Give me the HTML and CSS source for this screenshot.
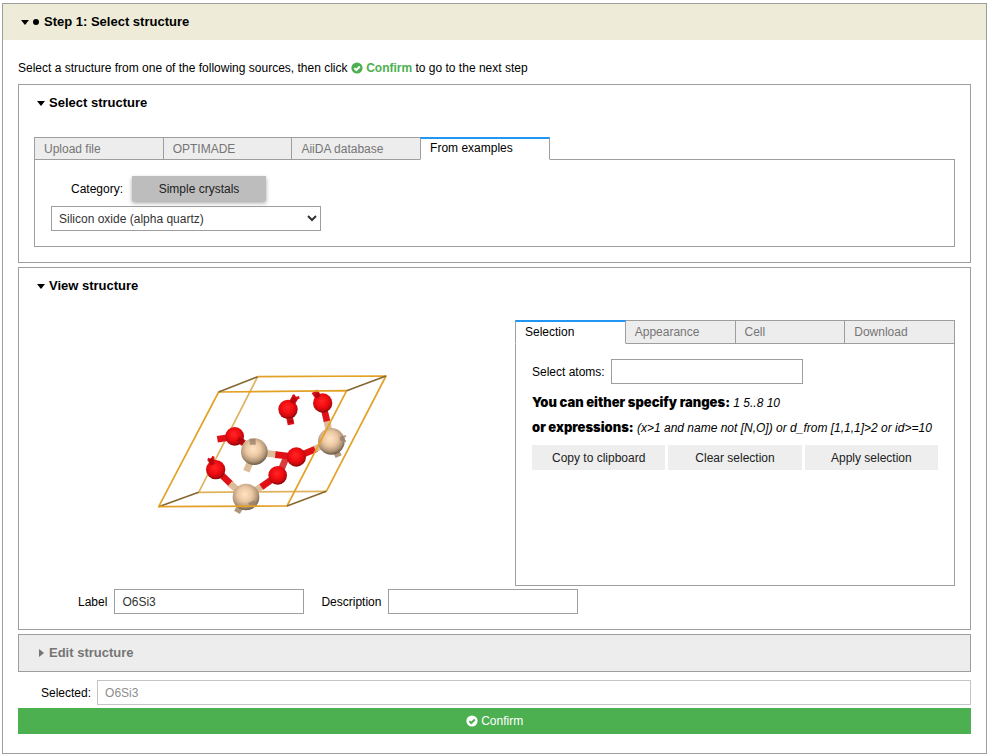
FILE: index.html
```html
<!DOCTYPE html>
<html lang="en">
<head>
<meta charset="utf-8">
<meta name="viewport" content="width=device-width, initial-scale=1">
<title>Select structure</title>
<link rel="stylesheet" href="styles.css">
</head>
<body>
<svg class="defs" aria-hidden="true">
  <symbol id="check-circle" viewBox="0 0 12 12">
    <circle cx="6" cy="6" r="5.6" fill="currentColor"/>
    <path class="tick" d="M3.3 6.1 5.3 8 8.8 4.5"/>
  </symbol>
</svg>
<main class="step">
  <h1 class="step-head"><button type="button" class="toggle"><span class="caret"></span><span class="dot"></span>Step 1: Select structure</button></h1>
  <div class="step-body">
    <p class="intro">Select a structure from one of the following sources, then click <span class="hint"><svg class="icon"><use href="#check-circle"/></svg> Confirm</span> to go to the next step</p>

    <section class="panel">
      <h2 class="panel-head"><button type="button" class="toggle"><span class="caret"></span>Select structure</button></h2>
      <div class="panel-body">
        <div class="tabs sources" role="tablist">
          <button type="button" role="tab" class="tab">Upload file</button>
          <button type="button" role="tab" class="tab">OPTIMADE</button>
          <button type="button" role="tab" class="tab">AiiDA database</button>
          <button type="button" role="tab" class="tab active" aria-selected="true">From examples</button>
        </div>
        <div class="tab-content">
          <div class="category">
            <span class="category-label">Category:</span>
            <button type="button" class="btn pressed">Simple crystals</button>
          </div>
          <select class="field example" aria-label="Example structure">
            <option>Silicon oxide (alpha quartz)</option>
          </select>
        </div>
      </div>
    </section>

    <section class="panel">
      <h2 class="panel-head"><button type="button" class="toggle"><span class="caret"></span>View structure</button></h2>
      <div class="panel-body">
        <div class="view">
          <svg class="molecule" viewBox="-348 -120 1443 798" role="img" aria-label="Silicon oxide unit cell">
            <defs>
              <radialGradient id="oxygen" cx=".46" cy=".4" r=".6">
                <stop offset="0" stop-color="#ff2626"/><stop offset=".5" stop-color="#f20d12"/><stop offset=".8" stop-color="#c9090e"/><stop offset="1" stop-color="#7c0609"/>
              </radialGradient>
              <radialGradient id="silicon" cx=".46" cy=".4" r=".6">
                <stop offset="0" stop-color="#ffe3c4"/><stop offset=".45" stop-color="#ebc8a3"/><stop offset=".78" stop-color="#b3977a"/><stop offset="1" stop-color="#695844"/>
              </radialGradient>
            </defs>
            <g class="cell back">
              <path d="M323 50 146 397 529 394"/>
              <path class="shade" d="M26 440 146 397"/>
            </g>
            <g class="bonds">
              <path class="o" d="M202 238 252 230"/>
              <path class="o" d="M253 230 282 250"/>
              <path class="o" d="M182 296 197 328 244 373"/>
              <path class="o end" d="M173 297 184 301 191 289"/>
              <path class="si" d="M240 371 288 411 340 376"/>
              <path class="o" d="M334 381 383 346"/>
              <path class="o far" d="M387 345 409 292"/>
              <path class="si" d="M313 276 382 284"/>
              <path class="o" d="M376 284 439 291"/>
              <path class="o" d="M439 291 500 266"/>
              <path class="si" d="M495 267 544 244"/>
              <path class="si" d="M544 244 530 180"/>
              <path class="o" d="M518 129 531 184"/>
              <path class="o" d="M493 94 518 129"/>
              <path class="o" d="M414 148 436 112"/>
              <path class="o end" d="M429 104 436 115 448 112"/>
              <path class="o" d="M414 148 423 194"/>
              <path class="si" d="M313 276 289 334"/>
              <path class="si dark" d="M288 411 261 457"/>
              <path class="si dark" d="M544 244 566 290"/>
            </g>
            <circle cx="254" cy="229" r="28" fill="url(#oxygen)"/>
            <path class="stub red" d="m264 236 16 13"/>
            <circle cx="313" cy="275" r="40" fill="url(#silicon)"/>
            <path class="stub" d="m308 236 0 18"/>
            <circle cx="383" cy="346" r="28" fill="url(#oxygen)"/>
            <circle cx="544" cy="244" r="40" fill="url(#silicon)"/>
            <path class="stub thin" d="m570 237 15 0m-15 -3 18 -6m-18 10 18 6"/>
            <circle cx="439" cy="291" r="29" fill="url(#oxygen)"/>
            <circle cx="518" cy="129" r="29" fill="url(#oxygen)"/>
            <path class="stub red" d="m498 101 8 11"/>
            <circle cx="414" cy="148" r="29" fill="url(#oxygen)"/>
            <path class="stub red" d="m426 129 9-16m-12 66 0 9"/>
            <circle cx="197" cy="329" r="29" fill="url(#oxygen)"/>
            <path class="stub red" d="m182 296 6 18"/>
            <circle cx="288" cy="411" r="40" fill="url(#silicon)"/>
            <path class="stub" d="m298 437 20-8"/>
            <g class="cell">
              <path d="M26 440 206 96 590 92 411 438Z"/>
              <path d="M323 50 708 48 529 394"/>
              <path class="shade" d="M206 96 323 50M590 92 708 48M411 438 529 394"/>
            </g>
          </svg>
          <div class="tools">
            <div class="tabs" role="tablist">
              <button type="button" role="tab" class="tab active" aria-selected="true">Selection</button>
              <button type="button" role="tab" class="tab">Appearance</button>
              <button type="button" role="tab" class="tab">Cell</button>
              <button type="button" role="tab" class="tab">Download</button>
            </div>
            <div class="tab-content selection">
              <div class="atoms">
                <label for="atoms">Select atoms:</label>
                <input class="field" id="atoms" type="text">
              </div>
              <p class="help"><strong>You can either specify ranges:</strong> <i>1 5..8 10</i></p>
              <p class="help"><strong>or expressions:</strong> <i>(x&gt;1 and name not [N,O]) or d_from [1,1,1]&gt;2 or id&gt;=10</i></p>
              <div class="actions">
                <button type="button" class="btn">Copy to clipboard</button>
                <button type="button" class="btn">Clear selection</button>
                <button type="button" class="btn">Apply selection</button>
              </div>
            </div>
          </div>
        </div>
        <div class="meta">
          <label for="label">Label</label>
          <input class="field" id="label" type="text" value="O6Si3">
          <label for="description">Description</label>
          <input class="field" id="description" type="text">
        </div>
      </div>
    </section>

    <section class="panel collapsed">
      <h2 class="panel-head"><button type="button" class="toggle"><span class="caret right"></span>Edit structure</button></h2>
    </section>

    <div class="selected">
      <label for="selected">Selected:</label>
      <input class="field" id="selected" type="text" value="O6Si3" disabled>
    </div>
    <button type="button" class="confirm"><svg class="icon"><use href="#check-circle"/></svg> Confirm</button>
  </div>
</main>
</body>
</html>
```
FILE: styles.css
```css
:root {
  --line: #9e9e9e;
  --green: #4caf50;
  --grey: #ededed;
  --tick: #fff;
}
* { box-sizing: border-box; }
body {
  margin: 0;
  padding: 3px 0 0 2px;
  background: #fff;
  color: #000;
  font: 12px/16px "Liberation Sans", Arial, sans-serif;
}
button, input, select { font: inherit; color: inherit; border-radius: 0; }
button { border: 0; padding: 0; background: none; }
h1, h2, p { margin: 0; }
.defs { position: absolute; width: 0; height: 0; }

.step { border: 1px solid var(--line); }
.step-head { background: #eeecd8; height: 36px; padding: 0 18px; display: flex; font-size: 13px; }
.step-body { padding: 20px 15px 19px; }
.intro { margin-bottom: 8px; }
.hint { color: var(--green); font-weight: bold; }
.icon { width: 12px; height: 12px; vertical-align: -2px; }
.tick { fill: none; stroke: var(--tick); stroke-width: 2; }

.toggle { display: flex; align-items: center; font-weight: bold; }
.caret { border: 4px solid transparent; border-top: 5px solid currentColor; border-bottom: 0; margin-right: 4px; }
.caret.right { border: 4px solid transparent; border-left: 5px solid currentColor; border-right: 0; margin: 0 5px 0 2px; }
.dot { width: 6px; height: 6px; border-radius: 50%; background: currentColor; margin-right: 5px; }

.panel { border: 1px solid var(--line); margin-bottom: 4px; }
.panel-head { height: 36px; padding: 0 18px; display: flex; font-size: 13px; }
.panel-body { padding: 16px 15px 15px; }
.collapsed { background: var(--grey); color: #757575; margin-bottom: 8px; }

.tabs { display: flex; }
.tab {
  flex: 1;
  height: 24px;
  padding: 0 9px;
  border: 1px solid var(--line);
  background: var(--grey);
  color: #757575;
  text-align: left;
  margin-bottom: -1px;
}
.tab + .tab { margin-left: -1px; }
.tab.active { border-top: 2px solid #2196f3; border-bottom-color: #fff; padding-bottom: 2px; background: #fff; color: #000; position: relative; }
.sources { width: 56%; }
.sources .tab { height: 23px; }
.tab-content { border: 1px solid var(--line); padding: 16px 16px 15px; }

.btn { height: 25px; background: #eee; color: #212121; }
.pressed { width: 134px; background: #bdbdbd; box-shadow: 0 2px 4px rgba(0, 0, 0, .35); }
.field { height: 25px; border: 1px solid var(--line); background: #fff; color: #333; padding: 0 7px; outline: 0; }
.category { display: flex; align-items: center; gap: 9px; margin-bottom: 5px; }
.category-label { width: 72px; text-align: right; }
.example { display: block; width: 270px; padding: 0 3px; }

.view { display: grid; grid-template-columns: minmax(0, 481fr) minmax(0, 440fr); }
.molecule { width: 100%; height: 266px; }
.tools { display: flex; flex-direction: column; }
.selection { flex: 1; padding: 15px 16px; }
.atoms { display: flex; align-items: center; gap: 6px; margin-bottom: 7px; }
.atoms .field { width: 192px; }
.help { height: 25px; line-height: 25px; white-space: nowrap; }
.help strong { font: 900 13px/16px Inter, sans-serif; }
.actions { display: grid; grid-template-columns: repeat(3, 1fr); gap: 3px; margin-top: 4px; }
.meta { display: flex; align-items: center; gap: 7px; margin: 3px 0 0 44px; }
.meta .field { width: 190px; margin-right: 10px; }
.selected { display: flex; align-items: center; gap: 6px; padding-left: 23px; margin-bottom: 3px; }
.selected .field { flex: 1; border-color: #c4c4c8; color: #8e8e8e; }
.confirm { --tick: var(--green); width: 100%; height: 26px; background: var(--green); color: #fff; }

.cell { fill: none; stroke: #e3a126; stroke-width: 5; stroke-linejoin: round; }
.cell.back { stroke: #dfb25c; }
.cell .shade { stroke: #86672f; }
.bonds { fill: none; stroke-width: 20; }
.bonds .o { stroke: #df1116; }
.bonds .o.end { stroke-width: 8; }
.bonds .o.far { stroke: #d93b3e; }
.bonds .si { stroke: #dcbc99; }
.bonds .si.dark { stroke: #ae967c; }
.stub { fill: none; stroke: #98816a; stroke-width: 18; stroke-opacity: .8; }
.stub.thin { stroke-width: 6; }
.stub.red { stroke: #a9080d; stroke-width: 14; }
```
